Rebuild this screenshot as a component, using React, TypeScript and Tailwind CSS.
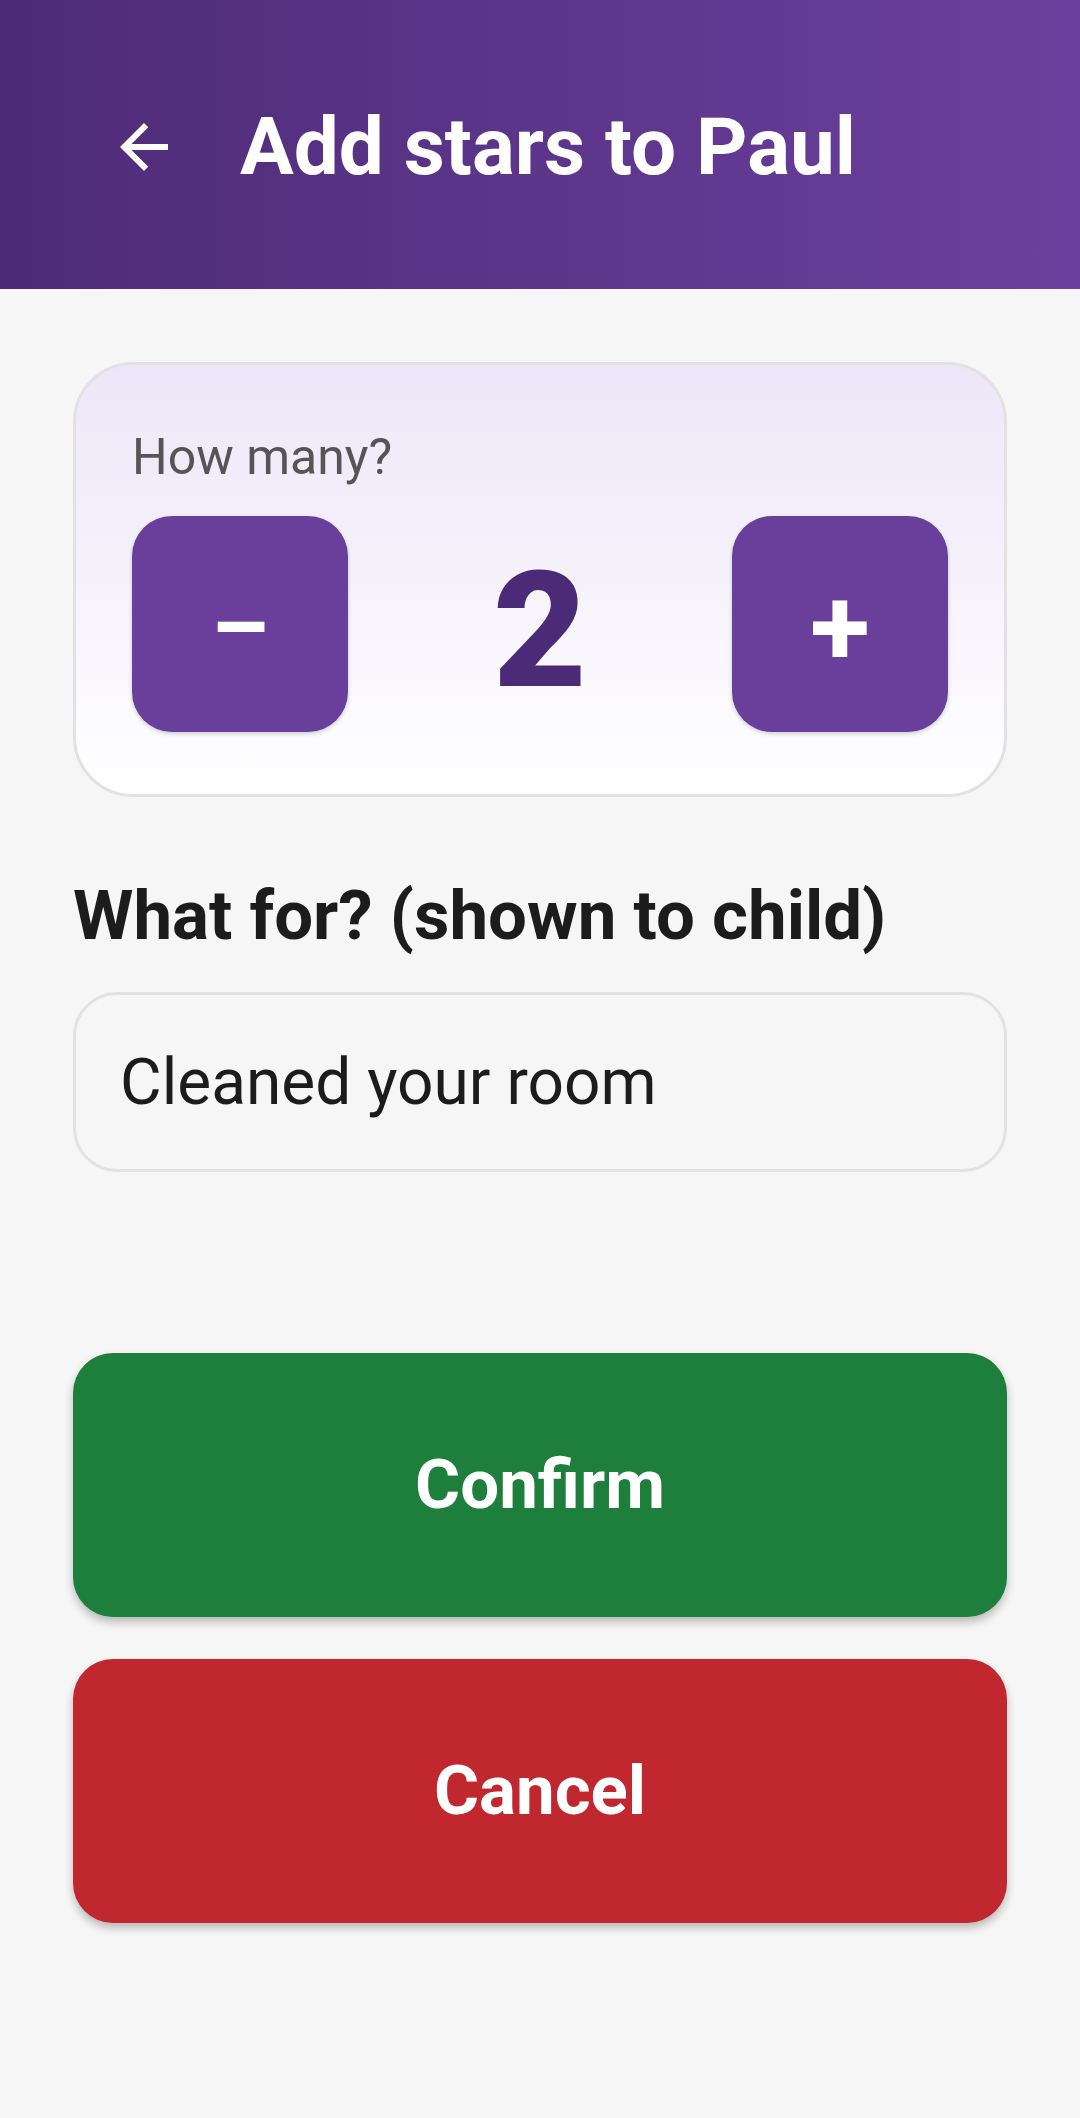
import { useState } from 'react';

const FONT = { fontFamily: 'Roboto, "Noto Sans", sans-serif' };

const BackArrow = () => (
  <svg width="72" height="72" viewBox="0 0 24 24" fill="#ffffff" aria-hidden="true">
    <path d="M20 11H7.83l5.59-5.59L12 4l-8 8 8 8 1.41-1.41L7.83 13H20v-2z" />
  </svg>
);

export default function App() {
  const [count, setCount] = useState(2);
  const [reason, setReason] = useState('Cleaned your room');

  return (
    <div className="min-h-[2118px] w-full bg-[#f6f6f6]" style={FONT}>
      {/* top bar */}
      <header className="flex h-[289px] items-center bg-gradient-to-r from-[#4e2b78] to-[#6b409e] pl-[108px] pt-[4px]">
        <button className="flex h-[72px] w-[72px] items-center justify-center" aria-label="Back">
          <BackArrow />
        </button>
        <h1 className="ml-[60px] text-[80px] font-bold leading-[94px] text-white">Add stars to Paul</h1>
      </header>

      <main className="flex flex-col px-[73px]">
        {/* counter card */}
        <section className="mt-[73px] rounded-[60px] border-[3px] border-[#e2e2e4] bg-gradient-to-b from-[#ede6f8] to-white px-[56px] pb-[62px] pt-[62px]">
          <div className="mb-[29px] text-[50px] leading-[60px] text-[#555555]">How many?</div>
          <div className="flex items-center justify-between">
            <button
              onClick={() => setCount(c => Math.max(0, c - 1))}
              className="flex h-[216px] w-[216px] items-center justify-center rounded-[40px] bg-[#6a3f9b] text-[92px] font-bold leading-none text-white shadow-[0_2px_4px_rgba(0,0,0,0.18)]"
            >
              <span className="mt-[8px]">–</span>
            </button>
            <div className="mt-[14px] text-[162px] font-black leading-none text-[#4b2a77]">{count}</div>
            <button
              onClick={() => setCount(c => c + 1)}
              className="flex h-[216px] w-[216px] items-center justify-center rounded-[40px] bg-[#6a3f9b] text-[110px] font-bold leading-none text-white shadow-[0_2px_4px_rgba(0,0,0,0.18)]"
            >
              <span className="mt-[8px]">+</span>
            </button>
          </div>
        </section>

        <label className="mb-[35px] mt-[78px] text-[69px] font-bold leading-[82px] text-[#1c1c1c]">
          What for? (shown to child)
        </label>
        <input
          value={reason}
          onChange={e => setReason(e.target.value)}
          className="h-[180px] w-full rounded-[44px] border-[3px] border-[#e2e2e2] bg-[#f6f6f6] px-[44px] text-[64px] text-[#1c1c1c] outline-none"
          style={FONT}
        />

        <button className="mt-[181px] flex h-[264px] w-full items-center justify-center rounded-[40px] bg-[#1e7e3c] text-[69px] font-bold text-white shadow-[0_5px_8px_rgba(0,0,0,0.25)]">
          Confirm
        </button>
        <button className="mt-[42px] flex h-[264px] w-full items-center justify-center rounded-[40px] bg-[#c0272f] text-[69px] font-bold text-white shadow-[0_5px_8px_rgba(0,0,0,0.25)]">
          Cancel
        </button>
      </main>
    </div>
  );
}
